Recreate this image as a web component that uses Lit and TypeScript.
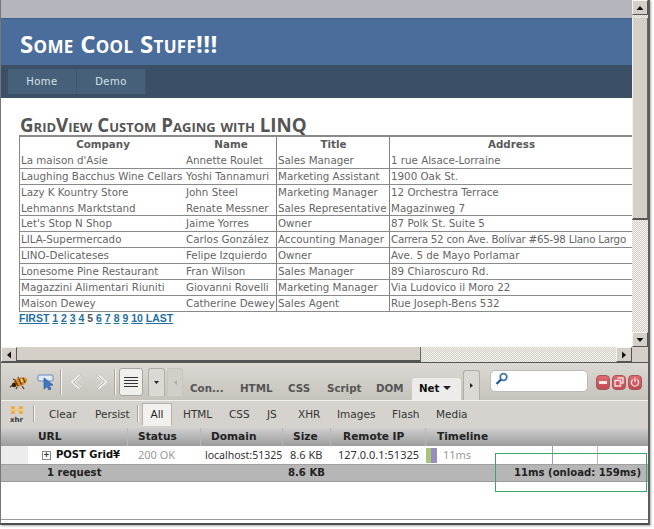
import { LitElement, html, css } from "lit";
import { customElement } from "lit/decorators.js";

type Row = [string, string, string, string, boolean];
const rows: Row[] = [
  ["La maison d'Asie", "Annette Roulet", "Sales Manager", "1 rue Alsace-Lorraine", true],
  ["Laughing Bacchus Wine Cellars", "Yoshi Tannamuri", "Marketing Assistant", "1900 Oak St.", true],
  ["Lazy K Kountry Store", "John Steel", "Marketing Manager", "12 Orchestra Terrace", false],
  ["Lehmanns Marktstand", "Renate Messner", "Sales Representative", "Magazinweg 7", true],
  ["Let's Stop N Shop", "Jaime Yorres", "Owner", "87 Polk St. Suite 5", true],
  ["LILA-Supermercado", "Carlos González", "Accounting Manager", "Carrera 52 con Ave. Bolívar #65-98 Llano Largo", true],
  ["LINO-Delicateses", "Felipe Izquierdo", "Owner", "Ave. 5 de Mayo Porlamar", true],
  ["Lonesome Pine Restaurant", "Fran Wilson", "Sales Manager", "89 Chiaroscuro Rd.", true],
  ["Magazzini Alimentari Riuniti", "Giovanni Rovelli", "Marketing Manager", "Via Ludovico il Moro 22", true],
  ["Maison Dewey", "Catherine Dewey", "Sales Agent", "Rue Joseph-Bens 532", true],
];

const arrow = (d: string) => html`<svg width="8" height="8" viewBox="0 0 8 8"><path d=${d} fill="#111"/></svg>`;

@customElement("app-root")
export class AppRoot extends LitElement {
  static styles = css`
    :host { display: block; width: 654px; height: 529px; background: #fff; overflow: hidden; position: relative; font-family: "Noto Sans", "DejaVu Sans", sans-serif; }
    .frame { width: 650px; height: 525px; box-sizing: border-box; display: flex; flex-direction: column; border-right: 2px solid #5c5c5c; border-bottom: 2px solid #4e4e4e; border-left: 1px solid #777; box-shadow: 1px 1px 2px #aaa; }
    .browser { display: grid; grid-template-columns: 631px 16px; grid-template-rows: 347px 15px; background: #d4d0c8; border-bottom: 1px solid #555; }
    .view { overflow: hidden; background: #fff; display: flex; flex-direction: column; }
    .band { height: 18px; flex: none; background: #b5b5bd; }
    .head { height: 47px; flex: none; box-sizing: border-box; background: #4a6d9c; border-top: 1px solid #3f5f86; padding: 11px 0 0 19px; color: #fff; font: small-caps 700 24px/28px "Open Sans", sans-serif; letter-spacing: .32px; }
    .nav { height: 33px; flex: none; box-sizing: border-box; background: #3b4f66; padding: 4px 0 0 7px; display: flex; }
    .nav a { width: 69px; height: 25px; box-sizing: border-box; background: #466079; color: #d8e2ea; font: 10px/25px "DejaVu Sans", sans-serif; letter-spacing: .5px; text-align: center; border-right: 1px solid #3f566e; }
    .main { padding: 16px 0 0 18px; width: 632px; box-sizing: border-box; }
    h2 { margin: 0 0 0 1px; height: 21px; color: #555; font: small-caps 700 18.75px/22px "Open Sans", sans-serif; white-space: nowrap; }
    .grid { width: 613px; box-sizing: border-box; border-top: 2px solid #8a8a8a; border-left: 1px solid #888; color: #666; font: 10.3px/15px "DejaVu Sans", sans-serif; }
    .r { display: grid; grid-template-columns: 165px 91px 113px 243px; height: 15.9px; white-space: nowrap; box-sizing: border-box; }
    .r.line { border-bottom: 1.5px solid #8a8a8a; }
    .c { overflow: visible; padding-left: 1px; }
    .c.v { border-left: 1px solid #808080; }
    .c.tight { letter-spacing: -.24px; }
    .r.h .c { font-weight: 700; text-align: center; color: #5a5a5a; }
    .pager { margin-top: 0; font: 700 10.5px/12px "Liberation Sans", sans-serif; color: #555; white-space: nowrap; }
    .pager a { color: #1f6f9f; text-decoration: underline; }
    .btn { box-sizing: border-box; background: #d4d0c8; border: 1px solid; border-color: #f4f3f0 #555 #555 #f4f3f0; display: flex; align-items: center; justify-content: center; flex: none; }
    .vbar { display: flex; flex-direction: column; background: repeating-conic-gradient(#d4d0c8 0 25%, #f2f1ee 0 50%) 0 0/2px 2px; }
    .vbar .b1, .vbar .b2 { height: 15px; }
    .vbar .thumb { margin-top: 3px; height: 202px; flex: none; background: #d4d0c8; border-bottom: 2px solid #555; border-right: 1px solid #666; border-left: 1px solid #f4f3f0; box-sizing: border-box; }
    .vbar .sp { flex: 1; }
    .hbar { display: flex; background: repeating-conic-gradient(#d4d0c8 0 25%, #f2f1ee 0 50%) 0 0/2px 2px; }
    .hbar .b { width: 16px; }
    .hbar .thumb { width: 404px; background: #d4d0c8; border-bottom: 2px solid #555; border-right: 1px solid #666; box-sizing: border-box; flex: none; }
    .hbar .sp { flex: 1; }
    .corner { background: #d4d0c8; }
    .tb1 { height: 38px; flex: none; box-sizing: border-box; display: flex; align-items: center; position: relative; background: linear-gradient(#dcd9d4, #c6c3bd); border-bottom: 1px solid #f2f1ee; color: #555; font: 700 10.3px/14px "DejaVu Sans", sans-serif; }
    .ibug { margin-left: 8px; }
    .iins { margin-left: 8px; }
    .sep { width: 1px; background: #f6f5f2; box-shadow: -1px 0 0 #a8a59f; flex: none; }
    .s1 { height: 26px; margin-left: 5px; }
    .ic { margin-left: 9px; }
    .list { width: 24px; height: 28px; margin-left: 3px; box-sizing: border-box; background: #f0efec; border: 1px solid #a8a59f; border-radius: 3px; display: flex; align-items: center; justify-content: center; flex: none; }
    .drop, .lft { height: 28px; box-sizing: border-box; border: 1px solid #b0ada7; border-bottom: none; border-radius: 3px 3px 0 0; display: flex; align-items: center; justify-content: center; flex: none; }
    .drop { width: 17px; margin-left: 5px; background: #dcd9d4; }
    .lft { width: 16px; margin-left: 2px; background: #d2cfc9; border-color: #c8c5bf; }
    .tabs { display: flex; align-self: flex-end; height: 22px; margin-left: 7px; line-height: 20px; white-space: nowrap; }
    .tabs span { color: #555; }
    .tabs .net { width: 49px; box-sizing: border-box; padding-left: 7px; background: #eeecea; color: #111; border-radius: 3px 3px 0 0; }
    .rgt { width: 17px; height: 30px; margin-left: 2px; box-sizing: border-box; align-self: flex-end; background: #dcd9d4; border: 1px solid #b0ada7; border-bottom: none; border-radius: 3px 3px 0 0; display: flex; align-items: center; justify-content: center; flex: none; }
    .search { width: 98px; height: 22px; margin-left: 10px; margin-top: -1px; box-sizing: border-box; background: #fff; border: 1px solid #bbb; border-radius: 5px; padding: 1px 0 0 4px; flex: none; }
    .wbtns { display: flex; gap: 2px; margin-left: 8px; margin-top: 1px; flex: none; }
    .w { width: 14px; height: 15px; box-sizing: border-box; border-radius: 4px; background: linear-gradient(#e06a70, #c04b52); border: 1px solid #a7555a; display: flex; align-items: center; justify-content: center; }
    .tb2 { height: 27px; flex: none; box-sizing: border-box; display: flex; align-items: center; padding-bottom: 2px; background: #d6d3ce; color: #333; font: 10.5px/14px "DejaVu Sans", sans-serif; white-space: nowrap; position: relative; }
    .xhr { margin-left: 9px; }
    .s2 { height: 17px; margin-left: 0; }
    .tb2 .t { flex: none; }
    .all { width: 30px; height: 23px; margin: 1px 11px 0 3px; box-sizing: border-box; background: #f2f1ee; border: 1px solid #b5b2ac; border-bottom-color: #f2f1ee; text-align: center; line-height: 21px; flex: none; color: #222; }
    .cols { display: grid; grid-template-columns: 127px 73px 82px 48px 95px 1fr; }
    .ch { height: 18px; flex: none; background: linear-gradient(#cfcfcf, #9c9c9c); color: #222; font: 700 10.6px/16px "DejaVu Sans", sans-serif; }
    .ch div { border-right: 1px solid #b8b8b8; box-sizing: border-box; padding-left: 10px; white-space: nowrap; }
    .ch div:first-child { padding-left: 37px; }
    .ch div:nth-child(5) { padding-left: 12px; }
    .ch div:last-child { border-right: none; padding-left: 11px; }
    .req { height: 18px; flex: none; background: #fff; font: 11px/18px "Noto Sans", sans-serif; color: #333; position: relative; white-space: nowrap; }
    .req > div { box-sizing: border-box; }
    .req .u { background: linear-gradient(90deg, #ececec 27px, #fff 27px); display: flex; align-items: center; padding-left: 41px; font: 700 10px/18px "DejaVu Sans", sans-serif; color: #111; }
    .plus { width: 9px; height: 9px; box-sizing: border-box; border: 1px solid #888; margin-right: 5px; display: flex; align-items: center; justify-content: center; font: 700 9px/7px "Liberation Sans", sans-serif; color: #333; flex: none; }
    .st { color: #999; padding-left: 10px; }
    .dm { padding-left: 4px; font-size: 10.5px; }
    .sz { padding-left: 7px; }
    .ip { padding-left: 7px; }
    .tl { display: flex; align-items: center; color: #999; }
    .bar { width: 11px; height: 15px; margin-right: 6px; background: linear-gradient(90deg, #a8c47a 45%, #9a8cc0 45%); flex: none; }
    .mark { position: absolute; top: 0; width: 1px; height: 18px; }
    .foot { height: 18px; flex: none; box-sizing: border-box; background: #b6b6b6; border-top: 1px solid #a0a0a0; border-bottom: 1px solid #9a9a9a; color: #222; font: 700 10.1px/16px "DejaVu Sans", sans-serif; display: flex; white-space: nowrap; }
    .foot span { flex: none; }
    .f1 { margin-left: 46px; width: 241px; }
    .f2 { width: 206px; }
    .f3 { width: 147px; text-align: right; }
    .blank { flex: 1; background: #fff; border-bottom: 1px solid #999; min-height: 0; margin-bottom: 3px; }
    .overlay { position: absolute; left: 495px; top: 453px; width: 152px; height: 39px; box-sizing: border-box; border: 1px solid #3fa568; pointer-events: none; }
  `;

  private tbText(left: number, width: number, text: string) {
    return html`<span class="t" style="margin-left:${left}px;width:${width}px">${text}</span>`;
  }

  render() {
    const pages = ["1", "2", "3", "4", "5", "6", "7", "8", "9", "10"];
    return html`
      <div class="frame">
        <div class="browser">
          <div class="view">
            <div class="band"></div>
            <div class="head">Some Cool Stuff!!!</div>
            <div class="nav"><a>Home</a><a>Demo</a></div>
            <div class="main">
              <h2>GridView Custom Paging with LINQ</h2>
              <div class="grid">
                <div class="r h">
                  <div class="c">Company</div><div class="c">Name</div><div class="c v">Title</div><div class="c v">Address</div>
                </div>
                ${rows.map(
                  (r) => html`<div class="r ${r[4] ? "line" : ""}">
                    <div class="c">${r[0]}</div><div class="c">${r[1]}</div><div class="c v">${r[2]}</div><div class="c v ${r[3].length > 40 ? "tight" : ""}">${r[3]}</div>
                  </div>`
                )}
              </div>
              <div class="pager">
                <a>FIRST</a>
                ${pages.map((p) => (p === "5" ? html`<span>5</span> ` : html`<a>${p}</a> `))}
                <a>LAST</a>
              </div>
            </div>
          </div>
          <div class="vbar">
            <div class="btn b1">${arrow("M4 2 L7.5 6 H0.5 Z")}</div>
            <div class="thumb"></div>
            <div class="sp"></div>
            <div class="btn b2">${arrow("M0.5 2 H7.5 L4 6 Z")}</div>
          </div>
          <div class="hbar">
            <div class="btn b">${arrow("M2 4 L6 0.5 V7.5 Z")}</div>
            <div class="thumb"></div>
            <div class="sp"></div>
            <div class="btn b">${arrow("M2 0.5 L6 4 L2 7.5 Z")}</div>
          </div>
          <div class="corner"></div>
        </div>

        <div class="tb1">
          <svg class="ibug" width="20" height="16" viewBox="0 0 20 16">
            <path d="M1 13 L7 9 M4 5 L8 7 M9 3 L10 6 M13 12 L15 15 M8 13 L7 15" stroke="#4a3a20" stroke-width="1.2"/>
            <ellipse cx="11" cy="8" rx="7.5" ry="4" transform="rotate(-22 11 8)" fill="#d98a28"/>
            <ellipse cx="13" cy="6.5" rx="3" ry="1.5" transform="rotate(-22 13 6.5)" fill="#f2c860"/>
            <path d="M6 6.5 L9 12 M10 5 L12.5 10.5 M14 4 L16 8.5" stroke="#5a3410" stroke-width="1.3"/>
            <circle cx="5" cy="11" r="2.2" fill="#33230f"/>
          </svg>
          <svg class="iins" width="19" height="18" viewBox="0 0 19 18">
            <rect x="1" y="2" width="15" height="6" rx="1" fill="#dfe8f4" stroke="#6a8ab8"/>
            <path d="M7 5 V16 L10 13.5 L12 17 L14 16 L12 12.5 L16 12 Z" fill="#3f78c8" stroke="#2a5a9a" stroke-width=".7"/>
          </svg>
          <div class="sep s1"></div>
          <svg class="ic" width="11" height="16" viewBox="0 0 11 16"><path d="M9 2 L2 8 L9 14" fill="none" stroke="#f4f3f0" stroke-width="3"/><path d="M9.5 2 L2.5 8 L9.5 14" fill="none" stroke="#a8a59f" stroke-width="1"/></svg>
          <svg class="ic" style="margin-left:14px" width="11" height="16" viewBox="0 0 11 16"><path d="M2 2 L9 8 L2 14" fill="none" stroke="#f4f3f0" stroke-width="3"/><path d="M1.5 2 L8.5 8 L1.5 14" fill="none" stroke="#a8a59f" stroke-width="1"/></svg>
          <div class="sep" style="height:26px;margin-left:8px"></div>
          <div class="list">
            <svg width="14" height="12" viewBox="0 0 14 12"><path d="M0 1.5 H14 M0 4.5 H14 M0 7.5 H14 M0 10.5 H14" stroke="#333"/></svg>
          </div>
          <div class="drop"><svg width="5" height="3" viewBox="0 0 5 3"><path d="M0 0 H5 L2.5 3 Z" fill="#222"/></svg></div>
          <div class="lft"><svg width="3" height="5" viewBox="0 0 3 5"><path d="M3 0 V5 L0 2.5 Z" fill="#b0ada7"/></svg></div>
          <div class="tabs">
            <span style="width:50px">Con...</span><span style="width:48px">HTML</span><span style="width:39px">CSS</span><span style="width:49px">Script</span><span style="width:36px">DOM</span>
            <span class="net">Net <svg width="8" height="4" viewBox="0 0 8 4" style="vertical-align:2px"><path d="M0 0 H8 L4 4 Z" fill="#222"/></svg></span>
          </div>
          <div class="rgt"><svg width="3" height="5" viewBox="0 0 3 5"><path d="M0 0 V5 L3 2.5 Z" fill="#222"/></svg></div>
          <div class="search">
            <svg width="14" height="14" viewBox="0 0 14 14"><circle cx="8.5" cy="5" r="3.3" fill="none" stroke="#3f78a8" stroke-width="1.8"/><path d="M6 7.5 L1.5 12" stroke="#1f5f98" stroke-width="2.4"/></svg>
          </div>
          <div class="wbtns">
            <div class="w"><svg width="8" height="3" viewBox="0 0 8 3"><rect width="8" height="3" fill="#fbe8e8"/></svg></div>
            <div class="w"><svg width="10" height="10" viewBox="0 0 10 10"><path d="M3.5 1 H9 V6 H7 M1 3.5 H6.5 V9 H1 Z" fill="none" stroke="#f6dcdc" stroke-width="1.4"/></svg></div>
            <div class="w"><svg width="10" height="10" viewBox="0 0 10 10"><path d="M3 2.5 A3.6 3.6 0 1 0 7 2.5 M5 0.5 V5" fill="none" stroke="#f6dcdc" stroke-width="1.4"/></svg></div>
          </div>
        </div>

        <div class="tb2">
          <svg class="xhr" width="15" height="18" viewBox="0 0 15 18">
            <rect x="1" y="1" width="4" height="8" fill="#e8b050"/><rect x="9" y="1" width="4" height="8" fill="#e8b050"/><rect x="1" y="4" width="12" height="2" fill="#f0c878"/>
            <text x="0" y="16.5" font-family="DejaVu Sans" font-size="7" font-weight="700" fill="#333">xhr</text>
          </svg>
          <div class="sep s2" style="margin-left:9px"></div>
          ${this.tbText(14, 46, "Clear")}
          ${this.tbText(0, 43, "Persist")}
          <div class="sep s2"></div>
          <div class="all">All</div>
          ${this.tbText(0, 46, "HTML")}
          ${this.tbText(0, 38, "CSS")}
          ${this.tbText(0, 31, "JS")}
          ${this.tbText(0, 39, "XHR")}
          ${this.tbText(0, 55, "Images")}
          ${this.tbText(0, 44, "Flash")}
          ${this.tbText(0, 40, "Media")}
        </div>

        <div class="ch cols">
          <div>URL</div><div>Status</div><div>Domain</div><div>Size</div><div>Remote IP</div><div>Timeline</div>
        </div>
        <div class="req cols">
          <div class="u"><span class="plus">+</span>POST Grid¥</div>
          <div class="st">200 OK</div>
          <div class="dm">localhost:51325</div>
          <div class="sz">8.6 KB</div>
          <div class="ip">127.0.0.1:51325</div>
          <div class="tl"><span class="bar"></span>11ms</div>
          <span class="mark" style="left:551px;background:#8fa0c8"></span>
          <span class="mark" style="left:596px;background:#e0a8a8"></span>
        </div>
        <div class="foot">
          <span class="f1">1 request</span>
          <span class="f2">8.6 KB</span>
          <span class="f3">11ms (onload: 159ms)</span>
        </div>
        <div class="blank"></div>
      </div>
      <div class="overlay"></div>
    `;
  }
}
